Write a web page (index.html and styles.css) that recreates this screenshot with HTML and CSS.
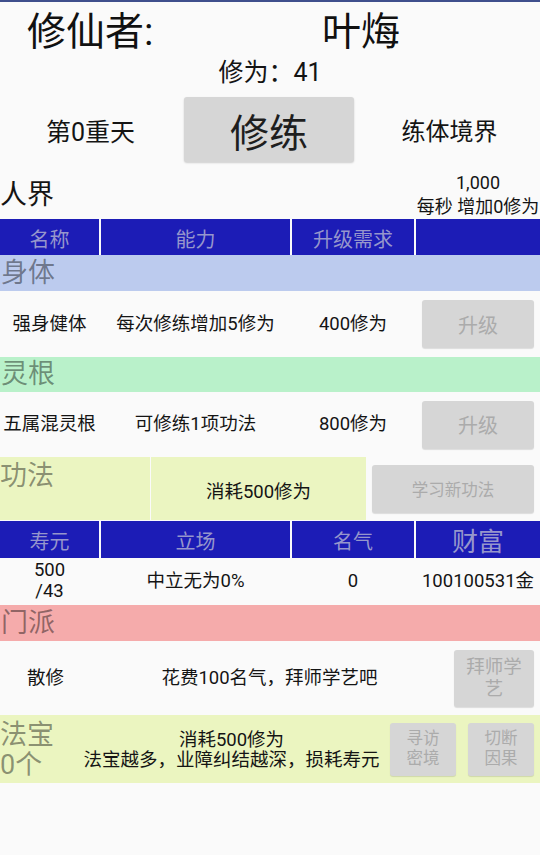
FILE: index.html
```html
<!DOCTYPE html>
<html lang="zh-CN">
<head>
<meta charset="utf-8">
<title>修仙者</title>
<link rel="stylesheet" href="styles.css">
</head>
<body>
<div class="topbar"></div>
<div class="title"><span class="t-label">修仙者:</span><span class="t-name">叶烸</span></div>
<div class="stat">修为：41</div>
<div class="train-row">
  <div class="side">第0重天</div>
  <button class="train-btn">修练</button>
  <div class="side side-r">练体境界</div>
</div>
<div class="realm-row">
  <div class="realm">人界</div>
  <div class="rate"><div>1,000</div><div>每秒 增加0修为</div></div>
</div>

<div class="grid4 thead">
  <div class="th">名称</div><div class="th">能力</div><div class="th">升级需求</div><div class="th"></div>
</div>
<div class="band band-body">身体</div>
<div class="grid4 trow">
  <div class="td">强身健体</div>
  <div class="td">每次修练增加5修为</div>
  <div class="td">400修为</div>
  <div class="td"><button class="btn btn-up">升级</button></div>
</div>
<div class="band band-ling">灵根</div>
<div class="grid4 trow trow2">
  <div class="td">五属混灵根</div>
  <div class="td">可修练1项功法</div>
  <div class="td">800修为</div>
  <div class="td"><button class="btn btn-up">升级</button></div>
</div>
<div class="gong">
  <div class="gong-name">功法</div>
  <div class="gong-cost">消耗500修为</div>
  <div class="gong-act"><button class="btn btn-learn">学习新功法</button></div>
</div>
<div class="grid4 thead thead2">
  <div class="th">寿元</div><div class="th">立场</div><div class="th">名气</div><div class="th th-big">财富</div>
</div>
<div class="grid4 srow">
  <div class="td td-life">500<br>/43</div>
  <div class="td">中立无为0%</div>
  <div class="td">0</div>
  <div class="td">100100531金</div>
</div>
<div class="band band-men">门派</div>
<div class="sect">
  <div class="td">散修</div>
  <div class="td">花费100名气，拜师学艺吧</div>
  <div class="td"><button class="btn btn-master">拜师学艺</button></div>
</div>
<div class="fabao">
  <div class="fabao-name">法宝<br>0个</div>
  <div class="fabao-desc">消耗500修为<br>法宝越多，业障纠结越深，损耗寿元</div>
  <div class="td"><button class="btn btn-small">寻访密境</button></div>
  <div class="td"><button class="btn btn-small">切断因果</button></div>
</div>
</body>
</html>
```
FILE: styles.css
```css
html, body {
  margin: 0;
  padding: 0;
  background: #fafafa;
}
body {
  width: 540px;
  font-family: Roboto, "Noto Sans CJK SC", sans-serif;
  color: #141414;
}
button {
  font-family: Roboto, "Noto Sans CJK SC", sans-serif;
  border: none;
  margin: 0;
  cursor: pointer;
}

.topbar {
  height: 2px;
  background: #3f4f8c;
}

.title {
  display: flex;
  height: 50px;
  padding-top: 5px;
  line-height: 50px;
  font-size: 39px;
  color: #111;
}
.t-label {
  flex: 0 0 322px;
  box-sizing: border-box;
  padding-left: 27px;
}

.stat {
  height: 32px;
  line-height: 32px;
  font-size: 25px;
  text-align: center;
}

.train-row {
  display: flex;
  align-items: center;
  height: 65px;
  margin-top: 8px;
}
.side {
  flex: 1;
  text-align: center;
  font-size: 25px;
  padding-right: 3px;
}
.side-r {
  font-size: 24px;
  padding-right: 0;
  padding-left: 5px;
}
.train-btn {
  flex: 0 0 170px;
  height: 65px;
  background: #d6d6d6;
  border-radius: 3px;
  box-shadow: 0 1px 2px rgba(0, 0, 0, 0.18);
  font-size: 39px;
  color: #1e1e1e;
  padding: 0;
}

.realm-row {
  display: flex;
  justify-content: space-between;
  align-items: flex-end;
  height: 57px;
}
.realm {
  font-size: 27px;
  line-height: 32px;
  padding-bottom: 8px;
}
.rate {
  width: 124px;
  text-align: center;
  font-size: 18px;
  line-height: 24px;
  white-space: nowrap;
}

.grid4 {
  display: grid;
  grid-template-columns: 99px 189px 122px 124px;
  column-gap: 2px;
}
.thead {
  height: 36px;
}
.th {
  background: #1c1cb6;
  color: #9696cc;
  font-size: 20px;
  display: flex;
  align-items: center;
  justify-content: center;
  padding-top: 2px;
  box-sizing: border-box;
}
.th-big {
  font-size: 26px;
  padding-top: 0;
}

.band {
  height: 36px;
  line-height: 36px;
  font-size: 27px;
  color: rgba(0, 0, 0, 0.42);
  padding-left: 1px;
}
.band-body { background: #bccbee; }
.band-ling { background: #b9f1ca; height: 35px; line-height: 35px; }
.band-men { background: #f5abab; }

.td {
  display: flex;
  align-items: center;
  justify-content: center;
  text-align: center;
  font-size: 18.5px;
  line-height: 21px;
  white-space: nowrap;
}
.trow {
  height: 66px;
}
.trow2 {
  height: 65px;
}

.btn {
  background: #d6d6d6;
  border-radius: 3px;
  box-shadow: 0 1px 1px rgba(0, 0, 0, 0.12);
  color: #ababab;
  padding: 0;
}
.btn-up {
  width: 112px;
  height: 48px;
  font-size: 20px;
}

.gong {
  display: grid;
  grid-template-columns: 150px 215px 1fr;
  column-gap: 1px;
  height: 63px;
  margin-bottom: 1px;
}
.gong-name {
  background: #ebf5c1;
  font-size: 27px;
  line-height: 32px;
  padding-top: 3px;
  color: rgba(0, 0, 0, 0.42);
}
.gong-cost {
  background: #ebf5c1;
  display: flex;
  align-items: center;
  justify-content: center;
  font-size: 18.5px;
  padding-top: 2px;
  box-sizing: border-box;
}
.gong-act {
  display: flex;
  align-items: center;
  padding-left: 5px;
  padding-right: 6px;
}
.btn-learn {
  width: 100%;
  height: 48px;
  font-size: 16.5px;
}

.srow {
  height: 48px;
}

.sect {
  display: grid;
  grid-template-columns: 91px 1fr 92px;
  height: 74px;
}
.btn-master {
  width: 80px;
  height: 57px;
  font-size: 18.5px;
  line-height: 22px;
  padding: 0 8px;
  white-space: normal;
}

.fabao {
  display: grid;
  grid-template-columns: 79px 1fr 78px 78px;
  height: 68px;
  background: #ebf5c0;
}
.fabao-name {
  font-size: 27px;
  line-height: 30px;
  color: rgba(0, 0, 0, 0.42);
  display: flex;
  align-items: center;
  padding-top: 1px;
}
.fabao-desc {
  display: flex;
  align-items: center;
  justify-content: center;
  text-align: center;
  font-size: 18.5px;
  line-height: 20px;
  white-space: nowrap;
  padding-top: 1px;
}
.btn-small {
  width: 66px;
  height: 53px;
  font-size: 16.5px;
  line-height: 20px;
  padding: 0 12px;
  white-space: normal;
}
```
